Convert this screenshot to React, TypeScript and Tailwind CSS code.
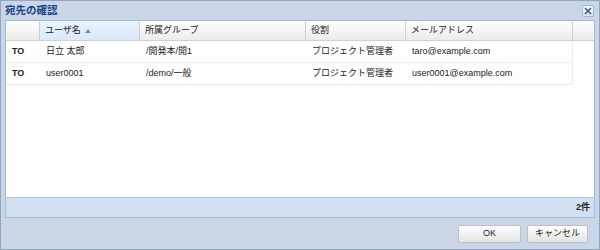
const font = {
  fontFamily: '"Liberation Sans", "Noto Sans CJK JP", sans-serif',
};

type Row = { kind: string; name: string; group: string; role: string; mail: string };

const rows: Row[] = [
  { kind: "TO", name: "日立 太郎", group: "/開発本/開1", role: "プロジェクト管理者", mail: "taro@example.com" },
  { kind: "TO", name: "user0001", group: "/demo/一般", role: "プロジェクト管理者", mail: "user0001@example.com" },
];

const cols = ["w-[34px]", "w-[100px]", "w-[166px]", "w-[100px]", "w-[167px]"];

function Cell({ w, children, bold }: { w: string; children?: React.ReactNode; bold?: boolean }) {
  return (
    <div className={`${w} shrink-0 pl-[6px] whitespace-nowrap overflow-hidden ${bold ? "font-bold" : ""}`}>
      {children}
    </div>
  );
}

function Btn({ label, w }: { label: string; w: string }) {
  return (
    <button
      className={`${w} h-[18px] rounded-[2px] border border-[#b7c0cc] bg-gradient-to-b from-[#ffffff] to-[#e4e4e4] text-[9px] text-[#222] flex items-center justify-center`}
    >
      {label}
    </button>
  );
}

export default function App() {
  return (
    <div
      style={font}
      className="w-[600px] h-[250px] bg-[#cad6e5] border border-[#8fa6c4] flex flex-col text-[#222]"
    >
      <div className="h-[19px] flex items-center justify-between pl-[4px] pr-[5px]">
        <span className="text-[10.5px] font-bold text-[#15428b] leading-none">宛先の確認</span>
        <div className="w-[12px] h-[12px] rounded-[2px] border border-[#9fb8dc] bg-gradient-to-b from-[#f4f8fd] to-[#dbe6f4] flex items-center justify-center mt-[1px]">
          <svg width="8" height="8" viewBox="0 0 8 8">
            <path d="M1 1 L7 7 M7 1 L1 7" stroke="#3c5a8c" strokeWidth="1.6" />
          </svg>
        </div>
      </div>

      <div className="mx-[4px] h-[198px] border border-[#99bbe8] bg-white flex flex-col">
        {/* header */}
        <div className="h-[20px] flex border-b border-[#d0d0d0] bg-gradient-to-b from-[#ffffff] to-[#ebebeb] text-[9px]">
          <div className={`${cols[0]} shrink-0 border-r border-[#d0d0d0]`} />
          <div className={`${cols[1]} shrink-0 border-r border-[#d0d0d0] bg-gradient-to-b from-[#ebf3fd] to-[#d9e8fb] flex items-center pl-[5px] gap-[4px]`}>
            <span>ユーザ名</span>
            <svg width="6" height="4" viewBox="0 0 6 4">
              <path d="M0 4 L3 0 L6 4 Z" fill="#6a8fc6" />
            </svg>
          </div>
          <div className={`${cols[2]} shrink-0 border-r border-[#d0d0d0] flex items-center pl-[5px]`}>所属グループ</div>
          <div className={`${cols[3]} shrink-0 border-r border-[#d0d0d0] flex items-center pl-[5px]`}>役割</div>
          <div className={`${cols[4]} shrink-0 border-r border-[#d0d0d0] flex items-center pl-[5px]`}>メールアドレス</div>
          <div className="flex-1" />
        </div>

        {/* body */}
        <div className="flex-1">
          {rows.map((r, i) => (
            <div
              key={i}
              className="w-[567px] h-[22px] flex items-center border-b border-r border-[#ededed] text-[9px]"
            >
              <Cell w={cols[0]} bold>{r.kind}</Cell>
              <Cell w={cols[1]}>{r.name}</Cell>
              <Cell w={cols[2]}>{r.group}</Cell>
              <Cell w={cols[3]}>{r.role}</Cell>
              <Cell w={cols[4]}>{r.mail}</Cell>
            </div>
          ))}
        </div>

        {/* paging toolbar */}
        <div className="h-[20px] border-t border-[#a9c3e6] bg-[#d3e0f1] flex items-center justify-end pr-[4px]">
          <span className="text-[9px] font-bold text-[#222]">2件</span>
        </div>
      </div>

      <div className="flex justify-end gap-[6px] pr-[11px] mt-[7px]">
        <Btn label="OK" w="w-[63px]" />
        <Btn label="キャンセル" w="w-[61px]" />
      </div>
    </div>
  );
}
